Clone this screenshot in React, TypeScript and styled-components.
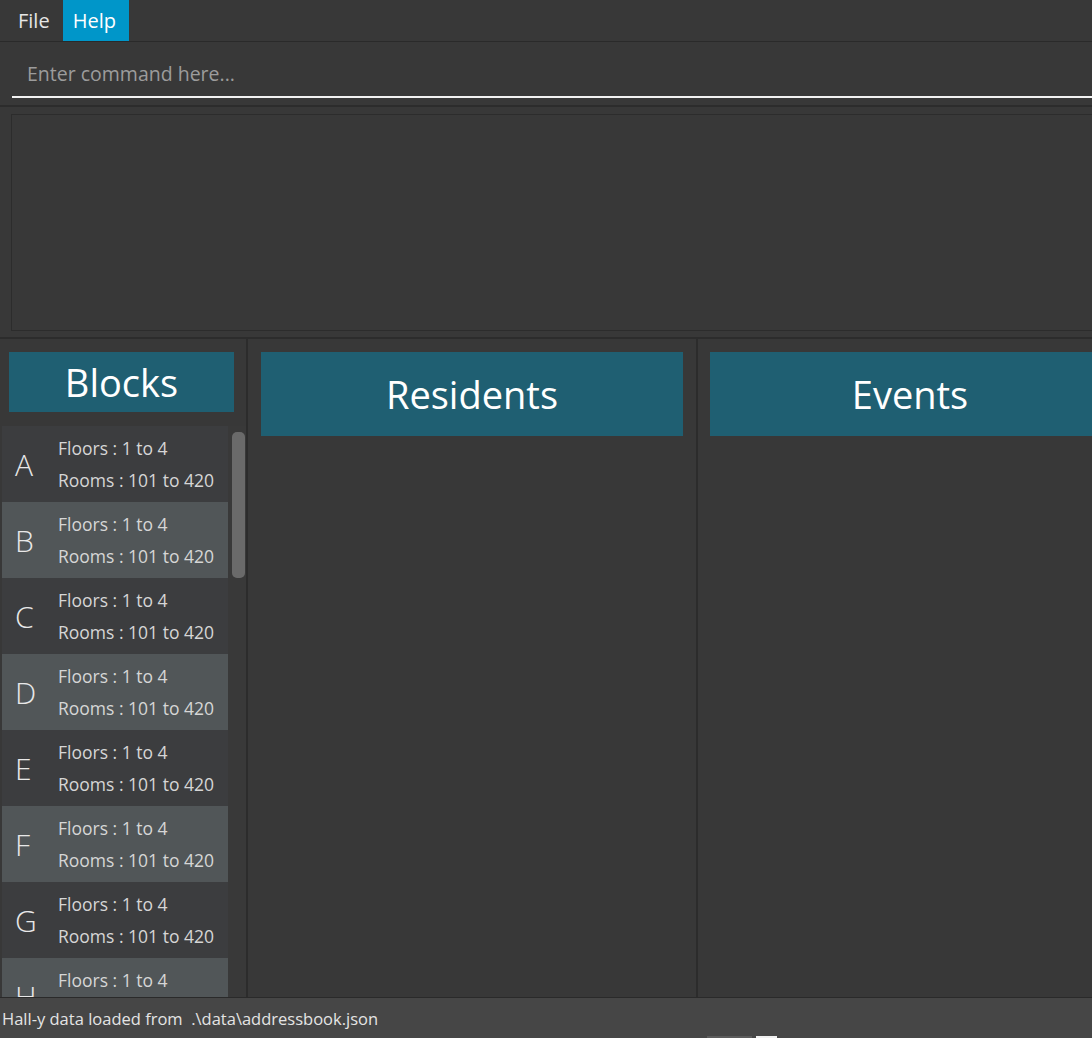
import styled, { createGlobalStyle } from "styled-components";

const GlobalStyle = createGlobalStyle`
  html, body {
    margin: 0;
    padding: 0;
    background: #383838;
    overflow: hidden;
  }
  * {
    box-sizing: border-box;
  }
`;

const Window = styled.div`
  width: 1110px;
  height: 1038px;
  display: flex;
  flex-direction: column;
  background: #383838;
  font-family: "Open Sans", "Noto Sans", sans-serif;
  color: #ffffff;
`;

const MenuBar = styled.div`
  height: 42px;
  display: flex;
  align-items: stretch;
  padding-left: 8px;
  border-bottom: 1px solid #2a2a2a;
`;

const MenuItem = styled.div<{ $active?: boolean }>`
  display: flex;
  align-items: center;
  padding: 0 13px 0 10px;
  font-size: 20px;
  color: ${(p) => (p.$active ? "#ffffff" : "#e6e6e6")};
  background: ${(p) => (p.$active ? "#0096c9" : "transparent")};
`;

const CommandArea = styled.div`
  height: 65px;
  padding: 0 0 7px 12px;
  border-bottom: 2px solid #2c2c2c;
`;

const CommandInput = styled.input`
  width: 100%;
  height: 56px;
  padding: 8px 15px 0 15px;
  background: transparent;
  border: none;
  border-bottom: 2px solid #f2f2f2;
  outline: none;
  font-family: inherit;
  font-size: 19.5px;
  color: #ffffff;

  &::placeholder {
    color: #9c9c9c;
  }
`;

const ResultArea = styled.div`
  height: 232px;
  padding: 7px 0 6px 11px;
  border-bottom: 2px solid #2c2c2c;
`;

const ResultBox = styled.div`
  height: 100%;
  border: 1px solid #2c2c2c;
  border-right: none;
`;

const Panels = styled.div`
  flex: 1;
  display: flex;
  min-height: 0;
  border-bottom: 1px solid #2a2a2a;
`;

const Column = styled.div<{ $width?: number; $pad: string }>`
  ${(p) => (p.$width ? `width: ${p.$width}px;` : "flex: 1;")}
  flex-shrink: 0;
  display: flex;
  flex-direction: column;
  min-height: 0;
  padding: ${(p) => p.$pad};
  border-right: 2px solid #2c2c2c;

  &:last-child {
    border-right: none;
  }
`;

const Header = styled.div<{ $height: number; $inset?: string }>`
  height: ${(p) => p.$height}px;
  margin: ${(p) => p.$inset || "0"};
  display: flex;
  align-items: center;
  justify-content: center;
  background: #1f5f72;
  font-size: 38px;
  color: #ffffff;
`;

const ListArea = styled.div`
  flex: 1;
  min-height: 0;
  display: flex;
  margin-top: 14px;
  padding-left: 2px;
  overflow: hidden;
`;

const List = styled.div`
  width: 226px;
  display: flex;
  flex-direction: column;
`;

const Track = styled.div`
  width: 18px;
  padding: 6px 1px 0 4px;
  background: #393939;
`;

const Thumb = styled.div`
  height: 146px;
  border-radius: 5px;
  background: #6a6a6a;
`;

const BlockRow = styled.div<{ $alt: boolean }>`
  height: 76px;
  flex-shrink: 0;
  display: flex;
  align-items: center;
  background: ${(p) => (p.$alt ? "#515658" : "#3c3d3f")};
`;

const Letter = styled.div`
  width: 56px;
  padding-left: 13px;
  font-size: 30px;
  font-weight: 300;
  color: #e8e8e8;
`;

const Details = styled.div`
  display: flex;
  flex-direction: column;
  gap: 6px;
  font-size: 17.5px;
  color: #d6d6d6;
  line-height: 26px;
`;

const StatusBar = styled.div`
  height: 40px;
  display: flex;
  align-items: center;
  padding-left: 2px;
  background: #464646;
  font-size: 16.5px;
  color: #e4e4e4;
  white-space: pre;
  position: relative;
`;

const EdgeMark = styled.div<{ $left: number; $w: number; $c: string }>`
  position: absolute;
  bottom: 0;
  left: ${(p) => p.$left}px;
  width: ${(p) => p.$w}px;
  height: 2px;
  background: ${(p) => p.$c};
`;

const blocks = ["A", "B", "C", "D", "E", "F", "G", "H"];

const App = () => {
  return (
    <Window>
      <GlobalStyle />
      <MenuBar>
        <MenuItem>File</MenuItem>
        <MenuItem $active>Help</MenuItem>
      </MenuBar>
      <CommandArea>
        <CommandInput placeholder="Enter command here..." />
      </CommandArea>
      <ResultArea>
        <ResultBox />
      </ResultArea>
      <Panels>
        <Column $width={248} $pad="13px 0 0 0">
          <Header $height={60} $inset="0 12px 0 9px">
            Blocks
          </Header>
          <ListArea>
            <List>
              {blocks.map((b, i) => (
                <BlockRow key={b} $alt={i % 2 === 1}>
                  <Letter>{b}</Letter>
                  <Details>
                    <span>Floors : 1 to 4</span>
                    <span>Rooms : 101 to 420</span>
                  </Details>
                </BlockRow>
              ))}
            </List>
            <Track>
              <Thumb />
            </Track>
          </ListArea>
        </Column>
        <Column $width={450} $pad="13px 13px 0 13px">
          <Header $height={84}>Residents</Header>
        </Column>
        <Column $pad="13px 0 0 12px">
          <Header $height={84}>Events</Header>
        </Column>
      </Panels>
      <StatusBar>
        Hall-y data loaded from  .\data\addressbook.json
        <EdgeMark $left={707} $w={45} $c="#5c5c5c" />
        <EdgeMark $left={756} $w={21} $c="#f0f0f0" />
      </StatusBar>
    </Window>
  );
};

export default App;
